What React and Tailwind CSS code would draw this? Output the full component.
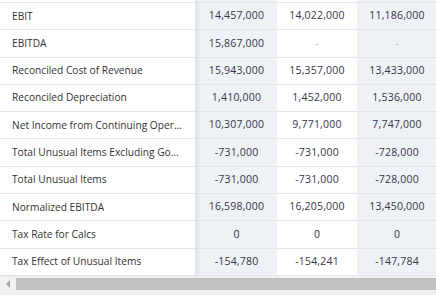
import React from 'react'

const rows = [
  ['EBIT', '14,457,000', '14,022,000', '11,186,000'],
  ['EBITDA', '15,867,000', '-', '-'],
  ['Reconciled Cost of Revenue', '15,943,000', '15,357,000', '13,433,000'],
  ['Reconciled Depreciation', '1,410,000', '1,452,000', '1,536,000'],
  ['Net Income from Continuing Operation Net Minority Interest', '10,307,000', '9,771,000', '7,747,000'],
  ['Total Unusual Items Excluding Goodwill', '-731,000', '-731,000', '-728,000'],
  ['Total Unusual Items', '-731,000', '-731,000', '-728,000'],
  ['Normalized EBITDA', '16,598,000', '16,205,000', '13,450,000'],
  ['Tax Rate for Calcs', '0', '0', '0'],
  ['Tax Effect of Unusual Items', '-154,780', '-154,241', '-147,784'],
]

const colBg = ['bg-[#eef1f5]', 'bg-white', 'bg-[#eef1f5]']

export default function App() {
  return (
    <div className="w-[436px] h-[299px] overflow-hidden bg-white text-[#333] font-['Open_Sans',sans-serif]">
      <div className="flex h-[275px]">
        {/* pinned label column */}
        <div className="relative z-10 w-[196px] shrink-0 flex flex-col border-r border-[#e3e6eb] shadow-[2px_0_4px_rgba(0,0,0,0.07)] bg-white text-[10.2px]">
          <div className="h-[2px]" />
          {rows.map((r) => (
            <div key={r[0]} className="h-[27.3px] shrink-0 border-t border-[#e3e6eb] flex items-center pl-3 pr-[11px] min-w-0">
              <span className="truncate">{r[0]}</span>
            </div>
          ))}
        </div>
        {/* values */}
        <div className="flex-1 flex flex-col min-w-0 text-[10.5px] tracking-[0.2px] text-[#36364a]">
          <div className="h-[2px] grid grid-cols-[81px_80px_80px]">
            {colBg.map((c, i) => <div key={i} className={c} />)}
          </div>
          {rows.map((r) => (
            <div key={r[0]} className="h-[27.3px] shrink-0 grid grid-cols-[81px_80px_80px] border-t border-[#e3e6eb]">
              {r.slice(1).map((v, i) => (
                <div key={i} className={`${colBg[i]} flex items-center justify-center ${v === '-' ? 'text-[#bbb]' : ''}`}>
                  {v}
                </div>
              ))}
            </div>
          ))}
        </div>
      </div>
      {/* horizontal scrollbar */}
      <div className="h-[20px] bg-[#f1f1f1] border-t border-[#e3e6eb] flex items-center pb-[3px]">
        <div className="w-[16px] h-full flex items-center justify-center">
          <svg width="6" height="8" viewBox="0 0 6 8"><path d="M5 0 L1 4 L5 8 Z" fill="#a3a3a3" /></svg>
        </div>
        <div className="flex-1 h-[12px] bg-[#c1c1c1]" />
      </div>
    </div>
  )
}
